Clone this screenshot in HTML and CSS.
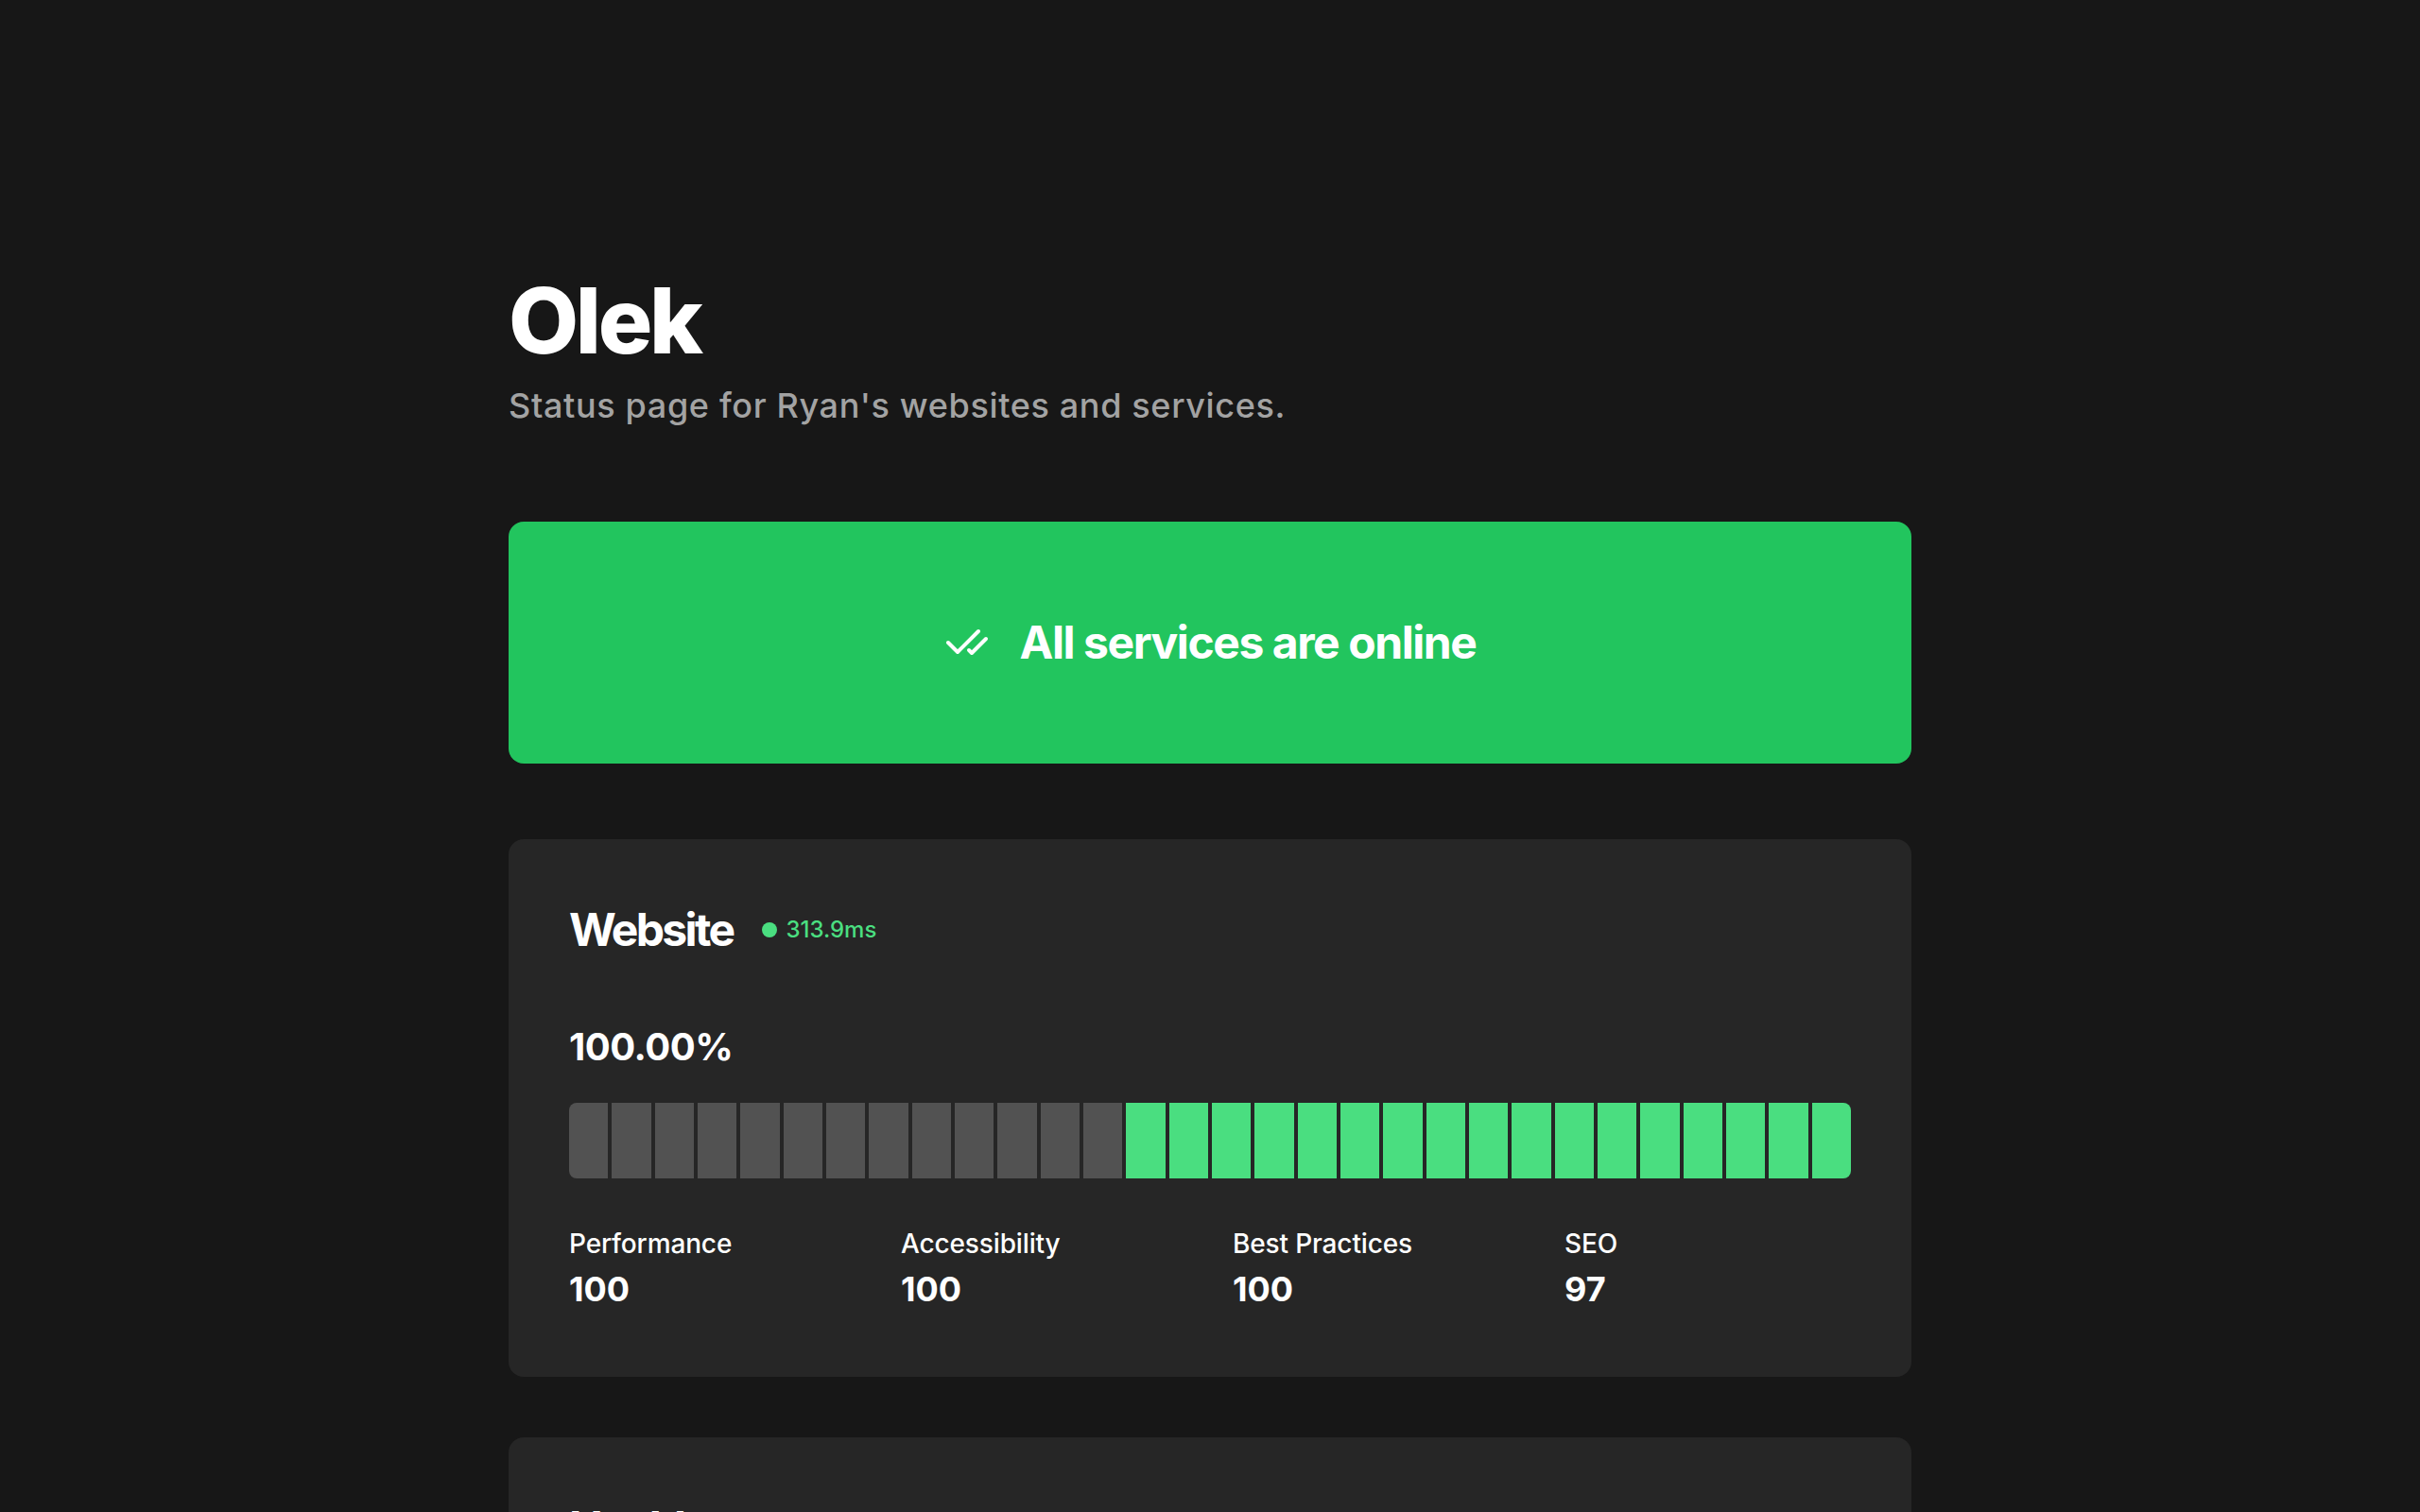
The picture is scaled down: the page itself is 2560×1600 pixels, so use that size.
FILE: index.html
```html
<!DOCTYPE html>
<html lang="en">
<head>
<meta charset="utf-8">
<title>Olek</title>
<link rel="stylesheet" href="styles.css">
</head>
<body>
<main class="page">
  <header class="header">
    <h1 class="title">Olek</h1>
    <p class="subtitle">Status page for Ryan's websites and services.</p>
  </header>

  <section class="banner">
    <svg class="banner-icon" viewBox="0 0 24 24" fill="none" stroke="currentColor" stroke-width="2" stroke-linecap="round" stroke-linejoin="round"><path d="M18 6 7 17l-5-5"/><path d="m22 10-7.5 7.5L13 16"/></svg>
    <span class="banner-text">All services are online</span>
  </section>

  <section class="card">
    <div class="card-head">
      <h2 class="card-title">Website</h2>
      <span class="latency"><span class="dot"></span>313.9ms</span>
    </div>
    <div class="uptime">100.00%</div>
    <div class="bar">
      <span class="seg off"></span><span class="seg off"></span><span class="seg off"></span><span class="seg off"></span><span class="seg off"></span><span class="seg off"></span><span class="seg off"></span><span class="seg off"></span><span class="seg off"></span><span class="seg off"></span><span class="seg off"></span><span class="seg off"></span><span class="seg off"></span>
      <span class="seg on"></span><span class="seg on"></span><span class="seg on"></span><span class="seg on"></span><span class="seg on"></span><span class="seg on"></span><span class="seg on"></span><span class="seg on"></span><span class="seg on"></span><span class="seg on"></span><span class="seg on"></span><span class="seg on"></span><span class="seg on"></span><span class="seg on"></span><span class="seg on"></span><span class="seg on"></span><span class="seg on"></span>
    </div>
    <div class="metrics">
      <div class="metric"><div class="metric-label">Performance</div><div class="metric-value">100</div></div>
      <div class="metric"><div class="metric-label">Accessibility</div><div class="metric-value">100</div></div>
      <div class="metric"><div class="metric-label">Best Practices</div><div class="metric-value">100</div></div>
      <div class="metric"><div class="metric-label">SEO</div><div class="metric-value">97</div></div>
    </div>
  </section>

  <section class="card">
    <div class="card-head">
      <h2 class="card-title">Health</h2>
      <span class="latency"><span class="dot"></span>124.2ms</span>
    </div>
    <div class="uptime">100.00%</div>
    <div class="bar">
      <span class="seg on"></span><span class="seg on"></span><span class="seg on"></span><span class="seg on"></span><span class="seg on"></span><span class="seg on"></span><span class="seg on"></span><span class="seg on"></span><span class="seg on"></span><span class="seg on"></span>
    </div>
  </section>
</main>
</body>
</html>
```

FILE: styles.css
```css
* { box-sizing: border-box; }

html, body {
  margin: 0;
  padding: 0;
  background: #171717;
  color: #ffffff;
  font-family: Inter, "Noto Sans", "Liberation Sans", sans-serif;
}

.page {
  width: 1484px;
  margin: 0 auto;
  padding-top: 291px;
  padding-bottom: 96px;
}

.header { margin: 0; }

.title {
  margin: 0;
  font-size: 96px;
  line-height: 96px;
  font-weight: 800;
  letter-spacing: -0.035em;
}

.subtitle {
  margin: 24px 0 0;
  font-size: 36px;
  line-height: 36px;
  font-weight: 500;
  letter-spacing: 0.018em;
  color: #a3a3a3;
}

.banner {
  margin-top: 105px;
  height: 256px;
  background: #22c55e;
  border-radius: 16px;
  display: flex;
  align-items: center;
  justify-content: center;
  gap: 32px;
}

.banner-icon {
  width: 48px;
  height: 48px;
  color: #ffffff;
  flex: none;
}

.banner-text {
  font-size: 48px;
  line-height: 48px;
  font-weight: 700;
  letter-spacing: -0.03em;
}

.card {
  margin-top: 80px;
  background: #262626;
  border-radius: 16px;
  padding: 64px 64px 75px;
}

.card + .card { margin-top: 64px; }

.card-head {
  display: flex;
  align-items: center;
  height: 64px;
  gap: 31px;
}

.card-title {
  margin: 0;
  font-size: 48px;
  line-height: 48px;
  font-weight: 700;
  letter-spacing: -0.055em;
}

.latency {
  display: flex;
  align-items: center;
  gap: 9px;
  font-size: 24px;
  line-height: 24px;
  font-weight: 500;
  color: #4ade80;
}

.dot {
  width: 16px;
  height: 16px;
  border-radius: 50%;
  background: #4ade80;
}

.uptime {
  margin-top: 72px;
  font-size: 40px;
  line-height: 40px;
  font-weight: 700;
  letter-spacing: -0.012em;
}

.bar {
  margin-top: 39px;
  display: flex;
  gap: 4px;
  height: 80px;
}

.seg {
  flex: 1 1 0;
}

.seg.off { background: #525252; }
.seg.on { background: #4ade80; }

.seg:first-child { border-radius: 8px 0 0 8px; }
.seg:last-child { border-radius: 0 8px 8px 0; }

.metrics {
  margin-top: 55px;
  display: grid;
  grid-template-columns: repeat(4, 1fr);
  gap: 48px;
}

.metric-label {
  font-size: 28px;
  line-height: 28px;
  font-weight: 500;
  letter-spacing: -0.005em;
}

.metric-value {
  margin-top: 16px;
  font-size: 36px;
  line-height: 36px;
  font-weight: 700;
}
```
